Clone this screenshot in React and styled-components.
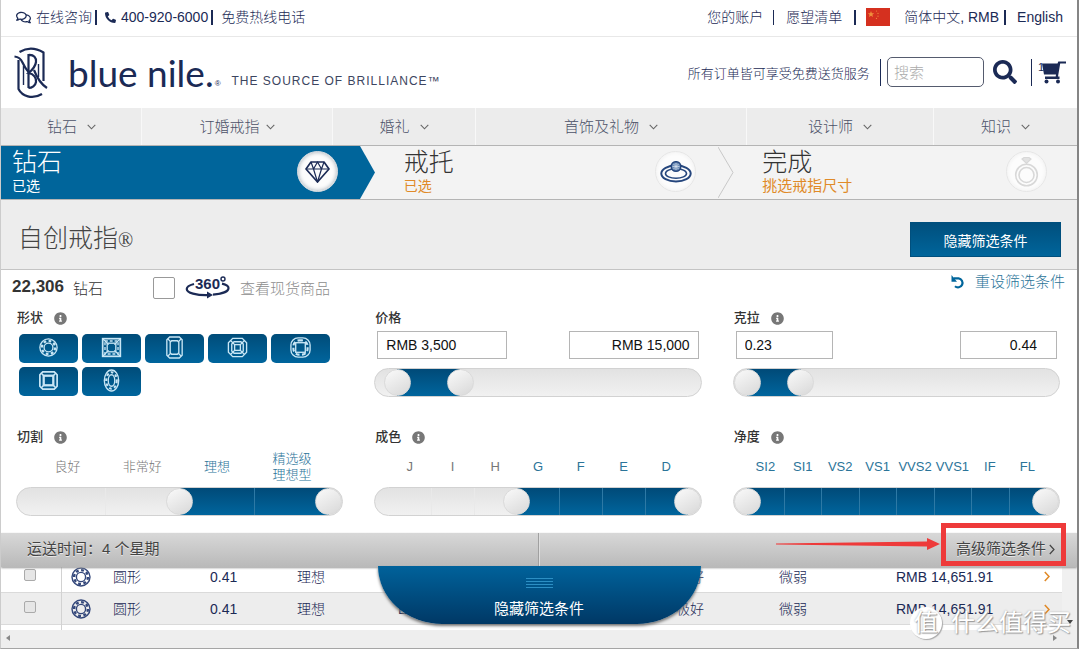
import React, { useState } from 'react'
import styled, { createGlobalStyle, css } from 'styled-components'
import { FaRegComments, FaPhoneAlt, FaSearch, FaInfoCircle } from 'react-icons/fa'

const navy = '#1b2a55'
const blue = '#00659b'
const linkBlue = '#2b7499'

const GlobalStyle = createGlobalStyle`
* {
box-sizing: border-box;
}
body {
margin: 0;
background-color: white;
color: #333;
font-family: "Liberation Sans", "Noto Sans CJK SC", sans-serif;
font-size: 14px;
font-weight: 300;
}
a {
color: inherit;
text-decoration: none;
}
button, input {
font-family: inherit;
font-size: inherit;
font-weight: inherit;
}
svg {
display: block;
}
`

const Page = styled.div`
position: relative;
margin-right: 1px;
border-left: 1px solid #ccc;
border-right: 2px solid #858585;
border-bottom: 1px solid #a5a5a5;
overflow: hidden;
`

/* header */

const TopBar = styled.div`
display: flex;
justify-content: space-between;
height: 37px;
padding: 0 14px 2px 15px;
border-bottom: 1px solid #e8e8e8;
color: ${navy};
line-height: 20px;
`

const TopGroup = styled.div`
display: flex;
align-items: center;
`

const TopLink = styled.a`
display: flex;
align-items: center;
gap: 5px;
white-space: nowrap;
`

const Divider = styled.span`
width: ${(props) => (props.$bold ? '2px' : '1px')};
height: ${(props) => props.$height || '15px'};
margin: 0 ${(props) => props.$right || '10px'} 0 ${(props) => props.$left || '3px'};
background-color: ${navy};
`

const FlagHolder = styled.span`
margin-right: 14px;
`

const Header = styled.header`
display: flex;
justify-content: space-between;
height: 71px;
padding: 0 11px 0 13px;
color: ${navy};
`

const Brand = styled.a`
display: flex;
align-items: center;
color: ${navy};
`

const BrandName = styled.span`
margin-left: 20px;
font-family: Lato, "DejaVu Sans Condensed", sans-serif;
font-size: 37px;
font-weight: 400;
line-height: 56px;
white-space: nowrap;
`

const Registered = styled.sup`
font-size: 8px;
align-self: flex-end;
line-height: 8px;
margin: 0 11px 20px 1px;
`

const Tagline = styled.span`
align-self: flex-end;
margin-bottom: 20px;
font-size: 12px;
line-height: 14px;
letter-spacing: 1px;
white-space: nowrap;
color: #3c4560;
`

const HeaderTools = styled.div`
display: flex;
align-items: center;
padding-bottom: 1px;
font-size: 13px;
white-space: nowrap;
`

const SearchInput = styled.input`
width: 97px;
height: 30px;
margin-right: 9px;
padding: 0 6px;
border: 1px solid #555b6e;
border-radius: 5px;
font-size: 15px;
&::placeholder {
color: #aaa;
}
`

const IconButton = styled.button`
display: flex;
padding: 0;
border: none;
background: none;
color: ${navy};
`

const CartLink = styled.a`
display: flex;
align-items: flex-start;
color: ${navy};
font-size: 11px;
line-height: 12px;
svg {
margin-left: -3px;
}
`

const Nav = styled.nav`
display: grid;
grid-template-columns: 140fr 191fr 143fr 271fr 187fr 144fr;
height: 37px;
background-color: #ececec;
`

const NavLink = styled.a`
display: flex;
align-items: center;
justify-content: center;
gap: ${(props) => (props.$tight ? '6px' : '10px')};
border-left: 1px solid ${(props) => (props.$first ? 'transparent' : '#f8f8f8')};
background-color: ${(props) => (props.$tight ? '#efefef' : 'transparent')};
color: #4b5168;
font-size: 15px;
line-height: 20px;
`

/* steps */

const Steps = styled.ol`
display: grid;
grid-template-columns: repeat(3, 1fr);
height: 55px;
margin: 0;
padding: 0;
list-style: none;
background-color: #f3f3f3;
border-top: 1px solid #b4b4b4;
border-bottom: 1px solid #b4b4b4;
`

const Step = styled.li`
position: relative;
display: flex;
justify-content: space-between;
align-items: center;
padding: 0 ${(props) => (props.$last ? '30px' : '22px')} 2px ${(props) => (props.$active ? '11px' : '44px')};
color: ${(props) => (props.$active ? 'white' : '#333')};
background-color: ${(props) => (props.$active ? blue : 'transparent')};
`

const StepTitle = styled.div`
font-size: 25px;
line-height: 28px;
`

const StepNote = styled.div`
font-size: ${(props) => (props.$wide ? '15px' : '14px')};
font-weight: 400;
line-height: 20px;
color: ${(props) => (props.$active ? 'white' : '#e08a28')};
`

const StepIcon = styled.div`
display: flex;
align-items: center;
justify-content: center;
width: 41px;
height: 41px;
border-radius: 50%;
background-color: #fcfcfc;
border: 1px solid ${(props) => (props.$active ? '#cfd6dc' : '#e6e6e6')};
box-shadow: inset 0 0 4px ${(props) => (props.$active ? '#9fa9b3' : '#eee')};
`

const StepTip = styled.svg`
position: absolute;
left: 100%;
top: 0;
z-index: 1;
`

/* title */

const TitleBar = styled.div`
display: flex;
align-items: center;
justify-content: space-between;
height: 70px;
padding: 0 16px 0 17px;
background-color: #ededed;
border-bottom: 1px solid #c4c4c4;
`

const Title = styled.h1`
margin: 0;
padding-top: 9px;
font-size: 25px;
font-weight: 300;
line-height: 30px;
color: #444;
`

const Mark = styled.span`
font-family: "Liberation Serif", serif;
font-size: 20px;
`

const HideButton = styled.button`
width: 151px;
height: 35px;
margin-top: 10px;
border: 1px solid #004f7d;
background: linear-gradient(#004f7d, ${blue});
color: white;
font-weight: 400;
`

/* filters */

const Filters = styled.section`
padding: 4px 17px 17px 15px;
`

const Summary = styled.div`
display: flex;
align-items: center;
height: 26px;
margin: 0 -5px 10px -4px;
font-size: 15px;
white-space: nowrap;
`

const Count = styled.strong`
margin-right: 9px;
font-size: 17px;
font-weight: 700;
color: #333;
`

const StockLabel = styled.label`
display: flex;
align-items: center;
gap: 10px;
margin-left: 50px;
color: #8d8d8d;
`

const StockCheckbox = styled.input`
appearance: none;
width: 22px;
height: 22px;
margin: 2px 0 0;
border: 1px solid #999;
border-radius: 2px;
background-color: white;
`

const ResetLink = styled.a`
display: flex;
align-self: flex-start;
align-items: center;
gap: 10px;
margin-left: auto;
line-height: 16px;
color: ${linkBlue};
`

const FilterGrid = styled.div`
display: grid;
grid-template-columns: repeat(3, 1fr);
gap: 32px 31px;
`

const FilterName = styled.div`
display: flex;
align-items: center;
gap: 11px;
padding-left: 1px;
font-size: 13px;
font-weight: 500;
line-height: 16px;
color: #333;
svg {
color: #777;
}
`

const ShapeList = styled.div`
display: flex;
flex-wrap: wrap;
gap: 4px;
margin: 8px 0 0 3px;
`

const ShapeButton = styled.button`
display: flex;
align-items: center;
justify-content: center;
width: 59px;
height: 29px;
padding: 0 0 2px;
border: none;
border-radius: 5px;
background: linear-gradient(#004c79, #00659d);
`

const Bounds = styled.div`
display: flex;
justify-content: space-between;
margin: 5px 3px 9px 3px;
`

const BoundInput = styled.input`
width: ${(props) => (props.$narrow ? '97px' : '130px')};
height: 28px;
padding: 0 ${(props) => (props.$narrow && props.$end ? '19px' : '8px')} 0 8px;
border: 1px solid #b5b5b5;
text-align: ${(props) => (props.$end ? 'right' : 'left')};
color: #111;
`

const Grades = styled.div`
display: grid;
grid-template-columns: repeat(${(props) => props.$count}, 1fr);
align-items: center;
height: 32px;
margin: 6px 14px 4px;
font-size: 13px;
line-height: 16px;
`

const Grade = styled.span`
display: flex;
flex-direction: column;
align-items: center;
white-space: nowrap;
color: ${(props) => (props.$on ? linkBlue : '#777')};
`

const Track = styled.div`
position: relative;
height: 29px;
border: 1px solid #d2d2d2;
border-radius: 15px;
background: linear-gradient(#e2e2e2, #f1f1f1);
`

const Rail = styled.div`
display: grid;
grid-template-columns: repeat(${(props) => props.$count}, 1fr);
height: 27px;
margin: 0 13px;
`

const fillStyle = css`
background: linear-gradient(#004a78, #00659d);
`

const Segment = styled.div`
border-left: 1px solid #e9e9e9;
${(props) => props.$on && fillStyle}
${(props) => props.$on && css`border-left-color: #2d79a5;`}
&:first-child {
border-left: none;
}
`

const Fill = styled.div`
height: 27px;
${fillStyle}
`

const thumb = css`
appearance: none;
width: 27px;
height: 27px;
border: 1px solid #dadada;
border-radius: 50%;
background: linear-gradient(150deg, #fafafa, #d8d8d8);
pointer-events: auto;
`

const RangeInput = styled.input`
appearance: none;
position: absolute;
left: 0;
top: 0;
width: 100%;
height: 27px;
margin: 0;
background: transparent;
pointer-events: none;
&::-webkit-slider-thumb {
${thumb}
}
&::-moz-range-thumb {
${thumb}
}
`

/* bottom bar + results */

const AdvancedBar = styled.div`
position: relative;
z-index: 3;
display: grid;
grid-template-columns: 1fr 1fr;
height: 34px;
background: linear-gradient(#d8d8d8, #b9b9b9);
color: #444;
font-size: 15px;
font-weight: 400;
line-height: 32px;
text-shadow: 0 1px 0 #e8e8e8;
box-shadow: 0 1px 2px #999;
`

const Shipping = styled.div`
padding-left: 26px;
border-right: 1px solid #a0a0a0;
`

const Advanced = styled.a`
display: flex;
align-items: center;
justify-content: flex-end;
gap: 3px;
padding: 0 22px 2px 0;
border-left: 1px solid #dedede;
`

const RedBox = styled.div`
position: absolute;
right: 11px;
top: -10px;
width: 125px;
height: 43px;
border: 5px solid #ee3a3a;
`

const RedArrow = styled.svg`
position: absolute;
right: 137px;
top: 4px;
`

const Results = styled.div`
display: flex;
height: 63px;
overflow: hidden;
`

const Table = styled.table`
flex: 1;
width: 100%;
margin-top: -7px;
border-collapse: collapse;
table-layout: fixed;
color: ${navy};
`

const Row = styled.tr`
height: 32px;
background-color: ${(props) => (props.$odd ? '#ededed' : 'white')};
border-bottom: 1px solid #dadada;
`

const Cell = styled.td`
padding: 2px 0 0;
line-height: 20px;
white-space: nowrap;
&:first-child {
border-right: 1px solid #d2d2d2;
}
svg {
margin-left: 7px;
}
`

const RowCheckbox = styled.input`
appearance: none;
display: block;
width: 12px;
height: 12px;
margin: 0 0 4px 23px;
border: 1px solid #aaa;
border-radius: 2px;
background-color: #e6e6e6;
`

const Go = styled.a`
color: #e08a28;
svg {
margin: 0;
}
`

const VerticalScroll = styled.div`
display: flex;
align-items: flex-end;
justify-content: center;
width: 15px;
padding-bottom: 6px;
background-color: #f0f0f0;
`

const HorizontalScroll = styled.div`
display: flex;
align-items: center;
justify-content: space-between;
height: 18px;
padding: 0 20px 2px 5px;
background-color: #eee;
`

const TabHolder = styled.div`
position: absolute;
z-index: 4;
left: 0;
right: 0;
bottom: 24px;
display: flex;
justify-content: center;
`

const HideTab = styled.button`
display: flex;
flex-direction: column;
align-items: center;
justify-content: space-between;
width: 323px;
height: 58px;
padding: 11px 0 5px;
border: none;
border-radius: 0 0 64px 64px / 0 0 58px 58px;
background: linear-gradient(#00629b, #003865);
box-shadow: 0 2px 3px #777;
color: white;
font-size: 15px;
font-weight: 400;
line-height: 20px;
`

const Watermark = styled.div`
position: absolute;
z-index: 5;
right: 6px;
bottom: 9px;
display: flex;
align-items: center;
gap: 9px;
color: white;
font-size: 24px;
font-weight: 400;
line-height: 32px;
text-shadow: 1px 1px 1px #999, 0 0 2px #aaa;
`

const WatermarkBadge = styled.span`
width: 32px;
height: 32px;
border-radius: 50%;
background-color: white;
box-shadow: 1px 1px 1px #aaa;
text-align: center;
`

const Chevron = ({ size = 9 }) => (
    <svg width={size} height="6" viewBox="0 0 9 6" fill="none" stroke="#666" strokeWidth="1.1">
        <path d="M0.7 0.8 L4.5 4.8 L8.3 0.8" />
    </svg>
)

const LogoMark = () => (
    <svg width="34" height="52" viewBox="0 0 34 52" fill="none" stroke={navy} strokeWidth="2.2">
        <path d="M5.5 5 C13 0.5 22 1 29.5 5.5 V34" />
        <path d="M0.5 9.5 C5 10 7 12 8.5 15.5 C10 19 12 22 14.5 25" />
        <path d="M4.5 13 V42 C8 49 18 53 28 47" />
        <path d="M9.5 19 V38" strokeWidth="1.4" />
        <path d="M14.5 41 V8 C20 7.5 22.5 11 22 15 C21.5 19 19 22.5 14.5 26 C20 27 22.5 31 22 35 C21.5 38.5 18 41 14.5 41" />
        <path d="M20 23 C23 31 27 37 33 41" />
        <path d="M24.5 17 V30" strokeWidth="1.4" />
    </svg>
)

const Cart = () => (
    <svg width="25" height="23" viewBox="0 0 25 23">
        <path d="M1 2.5 H16.5 L17.3 0.5 H25 V2.6 H19.2 L17 15.5 H18.5 V18 H4 V15.5 H14.7 L15 13.5 H3 Z" fill={navy} />
        <circle cx="5.5" cy="20.5" r="2" fill={navy} />
        <circle cx="17" cy="20.5" r="2" fill={navy} />
    </svg>
)

const Flag = () => (
    <svg width="24" height="18" viewBox="0 0 24 18">
        <rect width="24" height="18" fill="#d5301f" />
        <path d="M5 3 L5.9 5.2 L8.2 5.3 L6.4 6.8 L7 9 L5 7.7 L3 9 L3.6 6.8 L1.8 5.3 L4.1 5.2 Z" fill="#f08f3c" />
        <circle cx="10.5" cy="3" r="0.6" fill="#ec8a3c" />
        <circle cx="12" cy="5.4" r="0.6" fill="#ec8a3c" />
        <circle cx="12" cy="8.2" r="0.6" fill="#ec8a3c" />
        <circle cx="10.5" cy="10.4" r="0.6" fill="#ec8a3c" />
    </svg>
)

const DiamondIcon = () => (
    <svg width="25" height="22" viewBox="0 0 25 22" fill="none" stroke={navy} strokeWidth="1.7" strokeLinejoin="round">
        <path d="M6 1 H19 L24 8 L12.5 21 L1 8 Z" />
        <path d="M1 8 H24 M6 1 L8.5 8 L12.5 21 L16.5 8 L19 1 M8.5 8 L12.5 1 L16.5 8" strokeWidth="1.2" />
    </svg>
)

const RingIcon = () => (
    <svg width="32" height="22" viewBox="0 0 32 22" fill="none" stroke="#25467d">
        <ellipse cx="16" cy="12.5" rx="14.7" ry="8" strokeWidth="2" />
        <ellipse cx="16" cy="12.5" rx="10.5" ry="4.8" strokeWidth="1.6" />
        <circle cx="16" cy="5.5" r="4.8" fill="#6d8cb5" strokeWidth="1.5" />
        <path d="M12.5 5.5 H19.5 M16 2 V9 M13.5 3 L18.5 8 M18.5 3 L13.5 8" stroke="#dbe5f0" strokeWidth="0.7" />
    </svg>
)

const DoneIcon = () => (
    <svg width="25" height="31" viewBox="0 0 25 31" fill="none" stroke="#d8d8d8">
        <circle cx="12.5" cy="19" r="10.8" strokeWidth="1.6" />
        <circle cx="12.5" cy="19" r="7.5" strokeWidth="1.6" />
        <path d="M8 3 L10 1.5 H15 L17 3 L12.5 7.5 Z" fill="#e2e2e2" strokeWidth="1.2" />
    </svg>
)

const Spin360 = () => (
    <svg width="45" height="24" viewBox="0 0 45 24">
        <path d="M9 9 C-1 11.5 0 16.5 8 18.6 C13 19.9 18 20.3 23 20.1" fill="none" stroke={navy} strokeWidth="2.2" />
        <path d="M28 19.6 C37 19 43.5 16.5 43.5 13 C43.5 11 41 9.5 37 8.6" fill="none" stroke={navy} strokeWidth="2.2" />
        <path d="M22 16.6 L28 20 L22 23.6 Z" fill={navy} />
        <text x="10" y="14" fontSize="15" fontWeight="bold" fill={navy}>360</text>
        <circle cx="38" cy="4" r="2" fill="none" stroke={navy} strokeWidth="1.4" />
    </svg>
)

const ResetIcon = () => (
    <svg width="14" height="14" viewBox="0 0 14 14">
        <path d="M2.5 3.4 H7.6 A4.5 4.5 0 1 1 4 11.2" fill="none" stroke={blue} strokeWidth="2.2" />
        <path d="M0.5 0 V6.8 H6 Z" fill={blue} />
    </svg>
)

const AngleRight = ({ color = '#444', width = 1.6 }) => (
    <svg width="6" height="11" viewBox="0 0 6 11" fill="none" stroke={color} strokeWidth={width}>
        <path d="M0.8 1 L5 5.5 L0.8 10" />
    </svg>
)

const shapePaths = {
    round: (
        <>
            <circle cx="12" cy="12" r="9" />
            <circle cx="12" cy="12" r="4.6" />
            <circle cx="12" cy="12" r="6.9" strokeWidth="2.4" strokeDasharray="2.9 2.5" />
        </>
    ),
    princess: (
        <>
            <rect x="2.8" y="2.8" width="18.4" height="18.4" strokeWidth="1.8" />
            <rect x="7.5" y="7.5" width="9" height="9" />
            <path d="M3 3 L9 9 M21 3 L15 9 M3 21 L9 15 M21 21 L15 15" />
            <rect x="5.2" y="5.2" width="13.6" height="13.6" strokeDasharray="3 2" />
        </>
    ),
    emerald: (
        <>
            <path d="M7 1 H17 L20 4 V20 L17 23 H7 L4 20 V4 Z" />
            <path d="M9 5 H15 L16.5 6.5 V17.5 L15 19 H9 L7.5 17.5 V6.5 Z" />
            <path d="M5 3 L8 6 M19 3 L16 6 M5 21 L8 18 M19 21 L16 18" />
        </>
    ),
    asscher: (
        <>
            <path d="M7 2.5 H17 L21.5 7 V17 L17 21.5 H7 L2.5 17 V7 Z" />
            <path d="M8.5 6 H15.5 L18 8.5 V15.5 L15.5 18 H8.5 L6 15.5 V8.5 Z" />
            <rect x="9" y="9" width="6" height="6" />
            <path d="M5 5 L9 9 M19 5 L15 9 M5 19 L9 15 M19 19 L15 15" />
        </>
    ),
    cushion: (
        <>
            <rect x="2" y="2" width="20" height="20" rx="7.5" />
            <rect x="7" y="7" width="10" height="10" />
            <rect x="4.6" y="4.6" width="14.8" height="14.8" rx="6" strokeWidth="2.2" strokeDasharray="4 2.6" />
        </>
    ),
    radiant: (
        <>
            <path d="M6 3 H18 L21 6 V18 L18 21 H6 L3 18 V6 Z" strokeWidth="1.8" />
            <rect x="7" y="7" width="10" height="10" strokeWidth="2.4" />
            <path d="M4 4 L7 7 M20 4 L17 7 M4 20 L7 17 M20 20 L17 17" />
        </>
    ),
    oval: (
        <>
            <ellipse cx="12" cy="12" rx="7.5" ry="11" />
            <ellipse cx="12" cy="12" rx="3.4" ry="6" />
            <ellipse cx="12" cy="12" rx="5.5" ry="8.6" strokeWidth="2.2" strokeDasharray="2.8 2.6" />
        </>
    ),
}

const ShapeIcon = ({ shape, color = '#c8e6f5', size = 24 }) => (
    <svg width={size} height={size} viewBox="0 0 24 24" fill="none" stroke={color} strokeWidth="1.4">
        {shapePaths[shape]}
    </svg>
)

const Info = () => <FaInfoCircle size={13} />

const RangeSlider = ({ name, max, start, end, grades }) => {

    const [low, setLow] = useState(start)
    const [high, setHigh] = useState(end)

    const lowHandler = (ev) => {
        setLow(Math.min(+ev.target.value, high))
    }

    const highHandler = (ev) => {
        setHigh(Math.max(+ev.target.value, low))
    }

    return (
        <>
            {grades && (
                <Grades $count={max}>
                    {grades.map((grade, i) => (
                        <Grade key={i} $on={i >= low && i < high}>
                            {grade.split(' ').map((line) => <span key={line}>{line}</span>)}
                        </Grade>
                    ))}
                </Grades>
            )}
            <Track>
                <Rail $count={grades ? max : 1}>
                    {grades
                        ? grades.map((grade, i) => <Segment key={i} $on={i >= low && i < high} />)
                        : <Fill style={{ marginLeft: `${(low / max) * 100}%`, width: `${((high - low) / max) * 100}%` }} />}
                </Rail>
                <RangeInput type="range" aria-label={`${name} min`} min="0" max={max} value={low} onChange={lowHandler} />
                <RangeInput type="range" aria-label={`${name} max`} min="0" max={max} value={high} onChange={highHandler} />
            </Track>
        </>
    )
}

const navItems = ['钻石', '订婚戒指', '婚礼', '首饰及礼物', '设计师', '知识']

const shapes = ['round', 'princess', 'emerald', 'asscher', 'cushion', 'radiant', 'oval']

const diamonds = [
    { id: 1, shape: '圆形', carat: '0.41', cut: '理想', color: 'E', polish: '极好', fluorescence: '微弱', price: 'RMB 14,651.91' },
    { id: 2, shape: '圆形', carat: '0.41', cut: '理想', color: 'E', polish: '极好', fluorescence: '微弱', price: 'RMB 14,651.91' },
]

const App = () => {

    const [inStock, setInStock] = useState(false)

    return (
        <Page>
            <GlobalStyle />

            <TopBar>
                <TopGroup>
                    <TopLink href="#chat"><FaRegComments size={15} />在线咨询</TopLink>
                    <Divider $bold $right="8px" />
                    <TopLink href="#call"><FaPhoneAlt size={11} />400-920-6000</TopLink>
                    <Divider $bold $right="8px" />
                    <span>免费热线电话</span>
                </TopGroup>
                <TopGroup>
                    <TopLink href="#account">您的账户</TopLink>
                    <Divider $left="10px" $right="12px" />
                    <TopLink href="#wishlist">愿望清单</TopLink>
                    <Divider $bold $left="12px" />
                    <FlagHolder><Flag /></FlagHolder>
                    <TopLink href="#currency">简体中文, RMB</TopLink>
                    <Divider $bold $left="5px" $right="11px" />
                    <TopLink href="#english">English</TopLink>
                </TopGroup>
            </TopBar>

            <Header>
                <Brand href="#home">
                    <LogoMark />
                    <BrandName>blue nile.</BrandName>
                    <Registered>®</Registered>
                    <Tagline>THE SOURCE OF BRILLIANCE™</Tagline>
                </Brand>
                <HeaderTools>
                    <span>所有订单皆可享受免费送货服务</span>
                    <Divider $height="27px" $left="10px" $right="6px" />
                    <SearchInput type="search" placeholder="搜索" aria-label="搜索" />
                    <IconButton aria-label="搜索"><FaSearch size={24} /></IconButton>
                    <Divider $height="27px" $left="14px" $right="6px" />
                    <CartLink href="#cart">1<Cart /></CartLink>
                </HeaderTools>
            </Header>

            <Nav>
                {navItems.map((item, i) => (
                    <NavLink key={item} href="#nav" $first={i === 0} $tight={i === 1}>
                        {item}<Chevron />
                    </NavLink>
                ))}
            </Nav>

            <Steps>
                <Step $active>
                    <div>
                        <StepTitle>钻石</StepTitle>
                        <StepNote $active>已选</StepNote>
                    </div>
                    <StepIcon $active><DiamondIcon /></StepIcon>
                    <StepTip width="16" height="53" viewBox="0 0 16 53">
                        <path d="M0 0 L15 26.5 L0 53 Z" fill={blue} />
                    </StepTip>
                </Step>
                <Step>
                    <div>
                        <StepTitle>戒托</StepTitle>
                        <StepNote>已选</StepNote>
                    </div>
                    <StepIcon><RingIcon /></StepIcon>
                    <StepTip width="16" height="53" viewBox="0 0 16 53">
                        <path d="M0 1 L15 26.5 L0 52" fill="none" stroke="#c8c8c8" />
                    </StepTip>
                </Step>
                <Step $last>
                    <div>
                        <StepTitle>完成</StepTitle>
                        <StepNote $wide>挑选戒指尺寸</StepNote>
                    </div>
                    <StepIcon><DoneIcon /></StepIcon>
                </Step>
            </Steps>

            <TitleBar>
                <Title>自创戒指<Mark>®</Mark></Title>
                <HideButton>隐藏筛选条件</HideButton>
            </TitleBar>

            <Filters>
                <Summary>
                    <Count>22,306</Count>
                    <span>钻石</span>
                    <StockLabel htmlFor="stock">
                        <StockCheckbox
                        id="stock"
                        type="checkbox"
                        checked={inStock}
                        onChange={(ev) => setInStock(ev.target.checked)}
                        />
                        <Spin360 />
                        查看现货商品
                    </StockLabel>
                    <ResetLink href="#reset"><ResetIcon />重设筛选条件</ResetLink>
                </Summary>

                <FilterGrid>
                    <div>
                        <FilterName>形状 <Info /></FilterName>
                        <ShapeList>
                            {shapes.map((shape) => (
                                <ShapeButton key={shape} aria-label={shape}><ShapeIcon shape={shape} size={23} /></ShapeButton>
                            ))}
                        </ShapeList>
                    </div>
                    <div>
                        <FilterName>价格</FilterName>
                        <Bounds>
                            <BoundInput aria-label="最低价格" defaultValue="RMB 3,500" />
                            <BoundInput aria-label="最高价格" defaultValue="RMB 15,000" $end />
                        </Bounds>
                        <RangeSlider name="价格" max={100} start={3} end={24} />
                    </div>
                    <div>
                        <FilterName>克拉 <Info /></FilterName>
                        <Bounds>
                            <BoundInput aria-label="最小克拉" defaultValue="0.23" $narrow />
                            <BoundInput aria-label="最大克拉" defaultValue="0.44" $narrow $end />
                        </Bounds>
                        <RangeSlider name="克拉" max={100} start={0} end={18} />
                    </div>
                    <div>
                        <FilterName>切割 <Info /></FilterName>
                        <RangeSlider name="切割" max={4} start={2} end={4} grades={['良好', '非常好', '理想', '精选级 理想型']} />
                    </div>
                    <div>
                        <FilterName>成色 <Info /></FilterName>
                        <RangeSlider name="成色" max={7} start={3} end={7} grades={['J', 'I', 'H', 'G', 'F', 'E', 'D']} />
                    </div>
                    <div>
                        <FilterName>净度 <Info /></FilterName>
                        <RangeSlider name="净度" max={8} start={0} end={8} grades={['SI2', 'SI1', 'VS2', 'VS1', 'VVS2', 'VVS1', 'IF', 'FL']} />
                    </div>
                </FilterGrid>
            </Filters>

            <AdvancedBar>
                <Shipping>运送时间：4 个星期</Shipping>
                <Advanced href="#advanced">高级筛选条件<AngleRight width={1.2} /></Advanced>
                <RedArrow width="164" height="14" viewBox="0 0 164 14">
                    <path d="M0 6.5 L151 4.5 V1 L164 7 L151 13 V9.5 L0 7.5 Z" fill="#ee3a3a" />
                </RedArrow>
                <RedBox />
            </AdvancedBar>

            <Results>
                <Table>
                    <colgroup>
                        <col width="60" />
                        <col width="52" />
                        <col width="97" />
                        <col width="87" />
                        <col width="101" />
                        <col />
                        <col width="103" />
                        <col width="117" />
                        <col width="148" />
                        <col width="18" />
                    </colgroup>
                    <tbody>
                        {diamonds.map((d, i) => (
                            <Row key={d.id} $odd={i % 2 === 1}>
                                <Cell><RowCheckbox type="checkbox" aria-label={`${d.shape} ${d.id}`} /></Cell>
                                <Cell><ShapeIcon shape="round" color="#33477a" size={24} /></Cell>
                                <Cell>{d.shape}</Cell>
                                <Cell>{d.carat}</Cell>
                                <Cell>{d.cut}</Cell>
                                <Cell>{d.color}</Cell>
                                <Cell>{d.polish}</Cell>
                                <Cell>{d.fluorescence}</Cell>
                                <Cell>{d.price}</Cell>
                                <Cell><Go href="#detail" aria-label="detail"><AngleRight color="#e08a28" /></Go></Cell>
                            </Row>
                        ))}
                        <Row>
                            <Cell />
                            <Cell colSpan="9" />
                        </Row>
                    </tbody>
                </Table>
                <VerticalScroll>
                    <svg width="6" height="4" viewBox="0 0 6 4"><path d="M0 0 H6 L3 4 Z" fill="#444" /></svg>
                </VerticalScroll>
            </Results>
            <HorizontalScroll>
                <svg width="4" height="6" viewBox="0 0 4 6"><path d="M4 0 V6 L0 3 Z" fill="#888" /></svg>
                <svg width="4" height="6" viewBox="0 0 4 6"><path d="M0 0 V6 L4 3 Z" fill="#888" /></svg>
            </HorizontalScroll>

            <TabHolder>
                <HideTab>
                    <svg width="27" height="12" viewBox="0 0 27 12" stroke="#2c8fc4" strokeWidth="1">
                        <path d="M0 1.5 H27 M0 4.5 H27 M0 7.5 H27 M0 10.5 H27" />
                    </svg>
                    隐藏筛选条件
                </HideTab>
            </TabHolder>

            <Watermark>
                <WatermarkBadge>值</WatermarkBadge>
                什么值得买
            </Watermark>
        </Page>
    )
}

export default App
